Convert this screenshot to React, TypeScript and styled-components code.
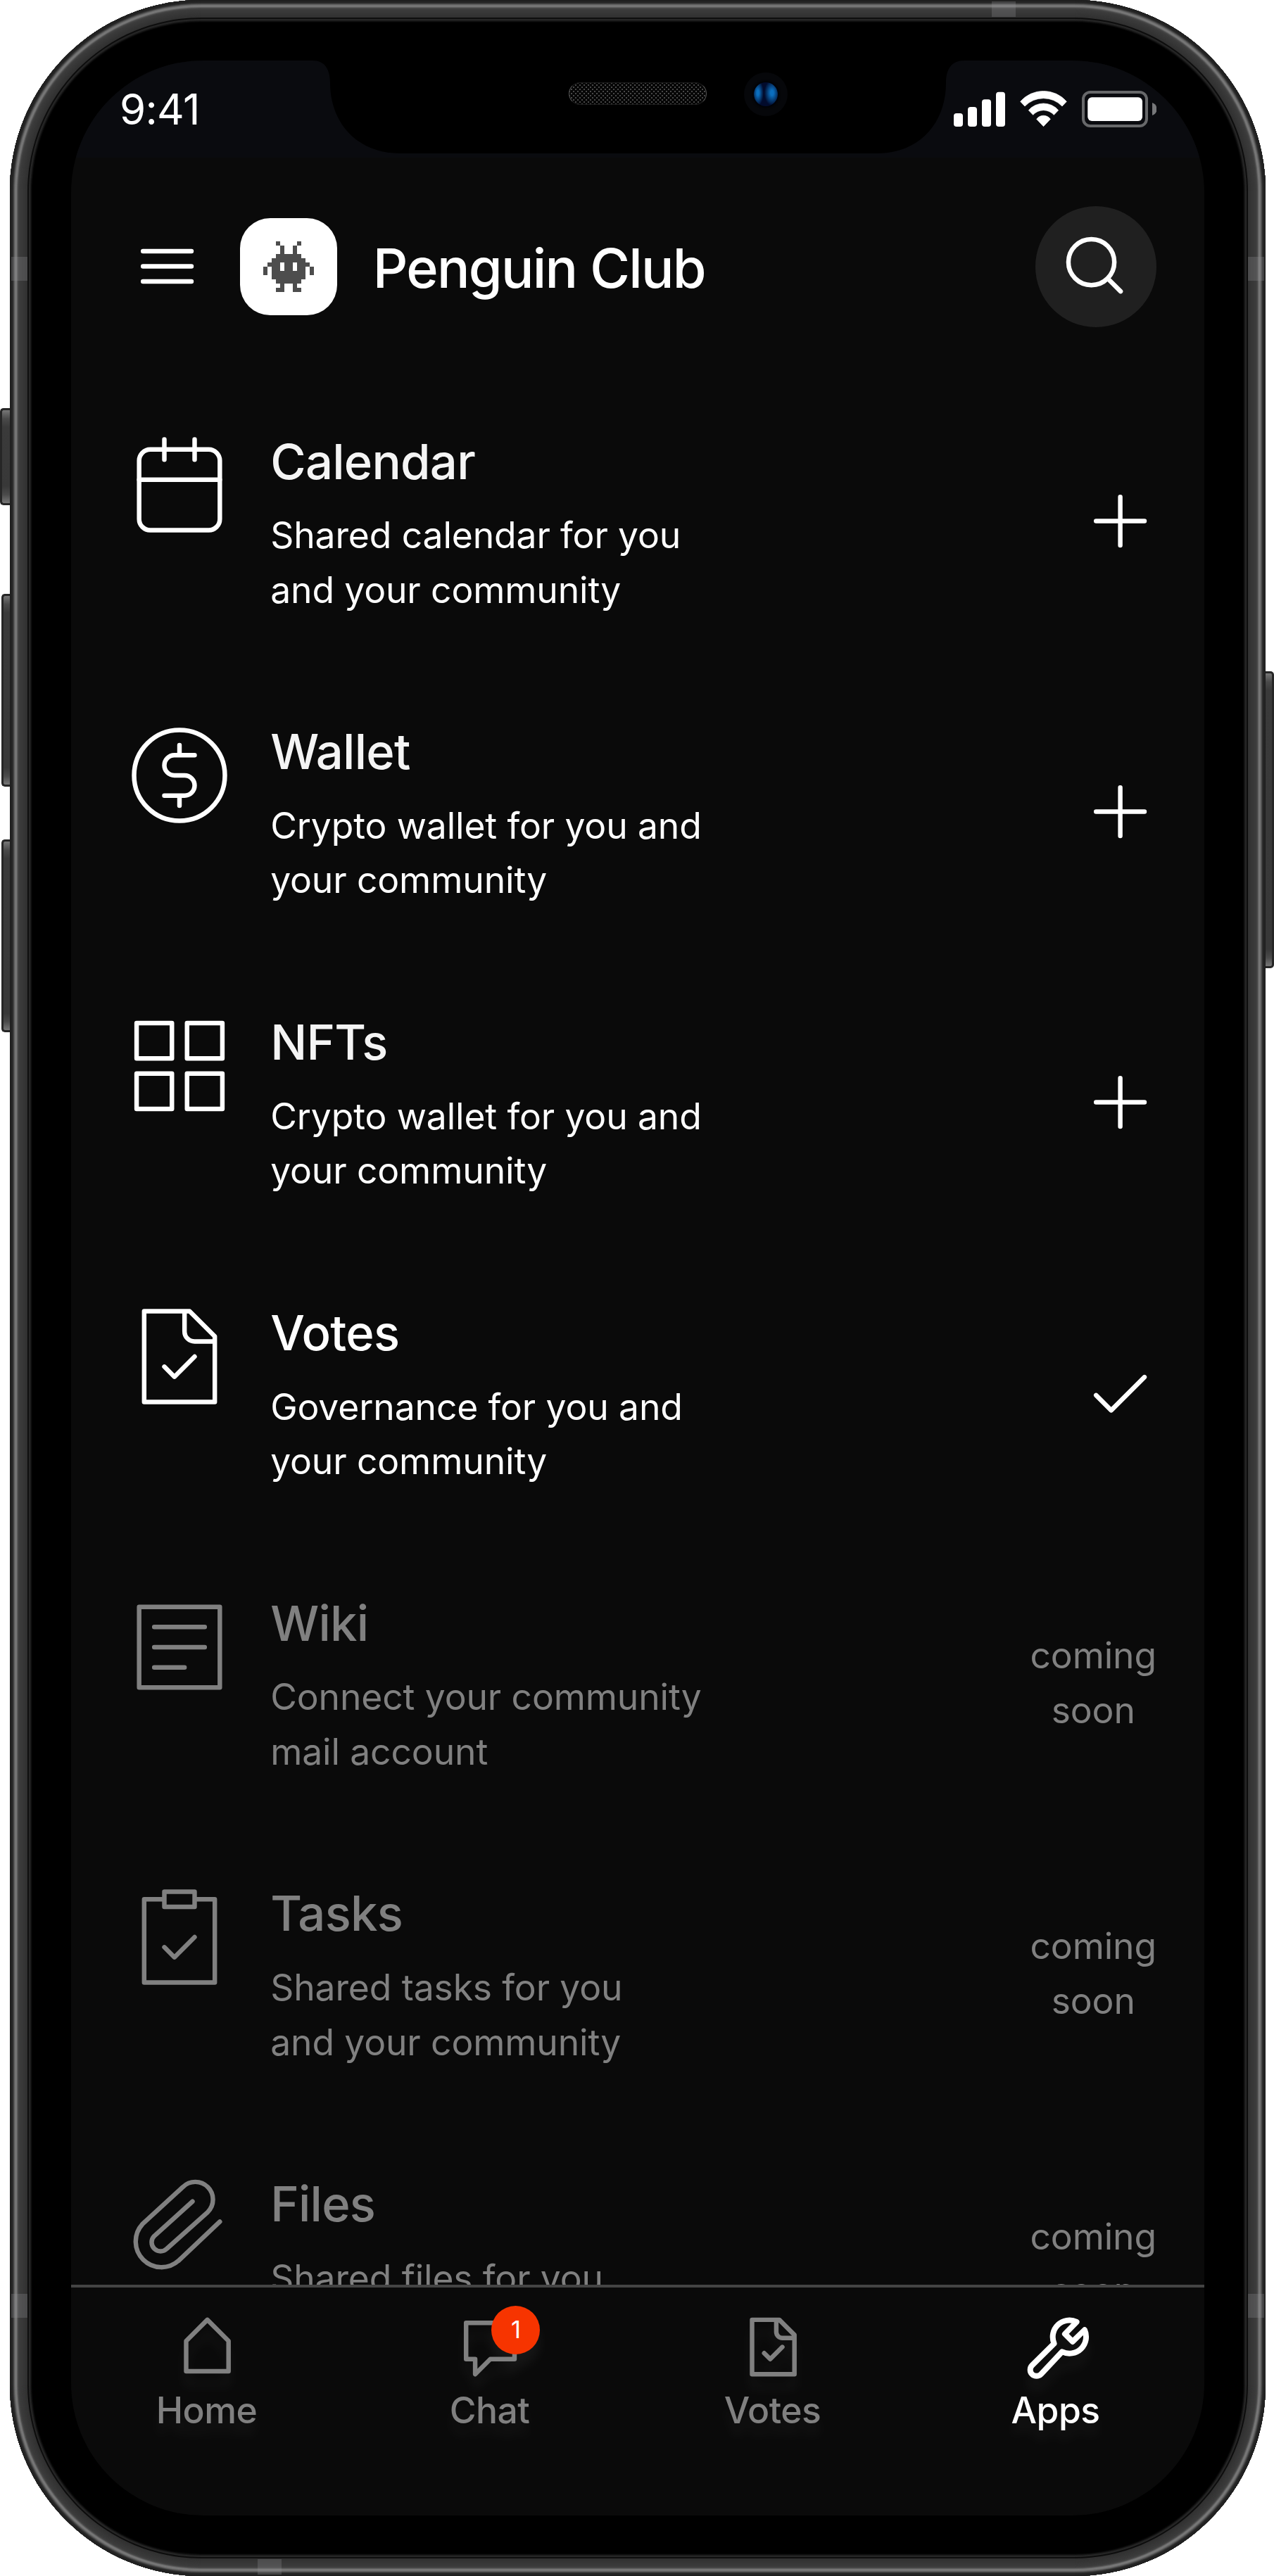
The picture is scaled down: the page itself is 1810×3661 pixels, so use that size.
import React from "react";
import styled, { createGlobalStyle, css } from "styled-components";

const GlobalStyle = createGlobalStyle`
  body {
    margin: 0;
    background: #fff;
    font-family: Inter, "Liberation Sans", sans-serif;
    font-optical-sizing: none;
    font-variation-settings: "opsz" 14;
    -webkit-font-smoothing: antialiased;
  }
`;

/* Metal rim shades, one entry per pixel from the outer edge inwards. */
const rim = [
  "#1d1d1d", "#242424", "#222222", "#272727", "#333333", "#484848", "#606060",
  "#707070", "#797979", "#747474", "#606060", "#4a4a4a", "#414141", "#3d3d3d",
  "#3b3b3b", "#3a3a3a", "#393939", "#383838", "#373737", "#363636", "#353535",
  "#343434", "#333333", "#323232", "#303030", "#0c0c0c", "#0f0f0f", "#282828",
  "#242424", "#1a1a1a", "#0e0e0e", "#050505",
];
const rimShadow = rim.map((c, i) => `inset 0 0 0 ${i + 1}px ${c}`).join(", ");

const Page = styled.div`
  position: relative;
  box-sizing: border-box;
  width: 1810px;
  height: 3661px;
  padding-left: 14px;
  overflow: hidden;
  background: #fff;
`;

const Phone = styled.div`
  position: relative;
  box-sizing: border-box;
  width: 1784px;
  height: 3661px;
  padding: 86px 87px;
  border-radius: 272px;
  background: #000;
  box-shadow: ${rimShadow};
`;

const SideButton = styled.div<{ $side: "left" | "right"; $top: number; $height: number; $width: number }>`
  position: absolute;
  ${(p) => p.$side}: 0;
  top: ${(p) => p.$top}px;
  width: ${(p) => p.$width}px;
  height: ${(p) => p.$height}px;
  box-sizing: border-box;
  border: 3px solid #262626;
  border-${(p) => (p.$side === "left" ? "right" : "left")}: 0;
  border-radius: ${(p) => (p.$side === "left" ? "5px 0 0 5px" : "0 5px 5px 0")};
  background: linear-gradient(#777 0, #4a4a4a 12px, #3a3a3a 24px, #383838 calc(100% - 24px), #4a4a4a calc(100% - 12px), #777 100%);
`;

/* The volume keys sit 2px closer to the body than the mute switch. */
const VolumeButton = styled(SideButton)`
  left: 2px;
`;

const Antenna = styled.div<{ $x: number; $y: number; $vertical?: boolean }>`
  position: absolute;
  left: ${(p) => p.$x}px;
  top: ${(p) => p.$y}px;
  width: ${(p) => (p.$vertical ? 34 : 23)}px;
  height: ${(p) => (p.$vertical ? 22 : 34)}px;
  background: rgba(150, 152, 156, 0.26);
`;

const Screen = styled.div`
  position: relative;
  display: flex;
  flex-direction: column;
  width: 1610px;
  height: 3489px;
  overflow: hidden;
  border-radius: 188px;
  background: #0a0a0a;
  color: #fff;
`;

const StatusBar = styled.div`
  position: relative;
  display: flex;
  flex: none;
  align-items: center;
  justify-content: space-between;
  box-sizing: border-box;
  height: 138px;
  padding: 0 68px 0 69px;
  background: #0a0b0f;
`;

const Clock = styled.div`
  font-size: 60px;
  font-weight: 400;
  line-height: 72px;
  letter-spacing: -0.7px;
`;

const StatusIcons = styled.svg`
  display: block;
  width: 288px;
  height: 52px;
`;

const NotchShape = styled.svg`
  position: absolute;
  left: 343px;
  top: -1px;
  width: 927px;
  height: 133px;
`;

const Speaker = styled.div`
  position: absolute;
  left: 707px;
  top: 31px;
  box-sizing: border-box;
  width: 196px;
  height: 32px;
  border: 1px solid #1c1c1c;
  border-left-color: #555;
  border-right-color: #555;
  border-radius: 16px;
  background-color: #060606;
  background-image: radial-gradient(circle, #484848 0.9px, transparent 1.5px),
    radial-gradient(circle, #484848 0.9px, transparent 1.5px);
  background-size: 6px 6px;
  background-position: 0 0, 3px 3px;
`;

const Camera = styled.div`
  position: absolute;
  left: 956px;
  top: 17px;
  display: flex;
  align-items: center;
  justify-content: center;
  width: 62px;
  height: 62px;
  border-radius: 50%;
  background: #06070a;
`;

const Lens = styled.div`
  width: 34px;
  height: 34px;
  border-radius: 50%;
  background: radial-gradient(ellipse 11px 18px at 76% 44%, #0b6fbf 20%, transparent),
    radial-gradient(ellipse 8px 18px at 17% 44%, #0b6fbf 20%, transparent), #020b2c;
  box-shadow: 0 0 3px 2px #010206;
`;

const Header = styled.header`
  display: flex;
  flex: none;
  align-items: center;
  box-sizing: border-box;
  height: 310px;
  padding: 0 68px 0 85px;
`;

const Avatar = styled.div`
  display: flex;
  flex: none;
  align-items: center;
  justify-content: center;
  width: 138px;
  height: 138px;
  margin-left: 51.6px;
  border-radius: 43px;
  background: #fff;
`;

const Robot = styled.svg`
  display: block;
  width: 72px;
  height: 72px;
`;

const Title = styled.h1`
  flex: 1;
  margin: 0 0 0 51px;
  font-size: 77.4px;
  font-weight: 500;
  line-height: 96px;
  letter-spacing: -1.75px;
  padding-top: 4px;
`;

const SearchButton = styled.button`
  display: flex;
  flex: none;
  align-items: center;
  justify-content: center;
  width: 172px;
  height: 172px;
  padding: 0;
  border: 0;
  border-radius: 50%;
  background: #202020;
  color: #fff;
`;

const AppList = styled.main`
  display: flex;
  flex: 1;
  flex-direction: column;
  gap: 139.1px;
  min-height: 0;
  box-sizing: border-box;
  padding: 69.4px 68px 0 68.2px;
  overflow: hidden;
`;

const Row = styled.section<{ $muted: boolean }>`
  display: flex;
  flex: none;
  height: 273.7px;
  color: ${(p) => (p.$muted ? "#808080" : "#fff")};
`;

const RowText = styled.div`
  flex: 1;
  padding: 1.2px 0 0 43px;
`;

const RowTitle = styled.h2<{ $soft: boolean }>`
  margin: 0 0 14.5px;
  font-size: 68.8px;
  font-weight: 500;
  line-height: 103.2px;
  letter-spacing: -0.75px;
  ${(p) => p.$soft && css`color: #f4f4f4;`}
`;

const RowDescription = styled.p`
  margin: 0;
  font-size: 51.6px;
  font-weight: 400;
  line-height: 77.4px;
  letter-spacing: -0.12px;
  white-space: pre-line;
`;

const RowAction = styled.div`
  display: flex;
  flex: none;
  align-items: center;
  padding-top: 1px;
`;

const ComingSoon = styled.div`
  font-size: 51.6px;
  line-height: 77.4px;
  letter-spacing: -0.12px;
  text-align: center;
  white-space: pre-line;
`;

const NavBar = styled.nav`
  display: flex;
  flex: none;
  gap: 142px;
  box-sizing: border-box;
  height: 328px;
  padding: 33.3px 0 0 64px;
  border-top: 4.3px solid #444;
`;

const NavItem = styled.a<{ $active: boolean }>`
  display: flex;
  flex-direction: column;
  align-items: center;
  width: 260px;
  color: ${(p) => (p.$active ? "#fff" : "#808080")};
  filter: drop-shadow(0 18px 8px rgba(255, 255, 255, 0.05));
`;

const NavIcon = styled.div`
  position: relative;
  flex: none;
  width: 103.2px;
  height: 103.2px;
`;

const NavLabel = styled.span`
  font-size: 51.6px;
  font-weight: 500;
  line-height: 77.4px;
  letter-spacing: -0.5px;
  margin-right: 3px;
`;

const Badge = styled.span`
  position: absolute;
  left: 53px;
  top: -7.5px;
  display: flex;
  align-items: center;
  justify-content: center;
  width: 69px;
  height: 69px;
  border-radius: 50%;
  background: #f73400;
  color: #fff;
  font-size: 34.4px;
  line-height: 34px;
`;

const IconSvg = styled.svg<{ $size: number }>`
  display: block;
  flex: none;
  width: ${(p) => p.$size}px;
  height: ${(p) => p.$size}px;
  fill: none;
  stroke: currentColor;
  stroke-linecap: round;
  stroke-linejoin: round;
`;

const shapes: Record<string, React.ReactNode> = {
  calendar: (
    <>
      <rect x="-8" y="-7" width="16" height="16" rx="2.2" />
      <path d="M-8 -1H8M-3 -9V-5M3 -9V-5" />
    </>
  ),
  wallet: (
    <>
      <circle r="9" />
      <path d="M3 -4H-1A2 2 0 0 0 -1 0H1A2 2 0 0 1 1 4H-3M0 -6V-4M0 4V6" />
    </>
  ),
  grid: <path d="M-8.5 -8.5H-1.5V-1.5H-8.5ZM1.5 -8.5H8.5V-1.5H1.5ZM-8.5 1.5H-1.5V8.5H-8.5ZM1.5 1.5H8.5V8.5H1.5Z" />,
  votes: <path d="M-7 -9H2L7 -4V9H-7ZM1 -9V-5A2 2 0 0 0 3 -3H7M-3 2L-1 4L3 0" />,
  wiki: <path d="M-8 -8H8V8H-8ZM-5 -4H5M-5 0H5M-5 4H1" />,
  tasks: <path d="M-3 -7.5H-7V9H7V-7.5H3M-3 -9H3V-6H-3ZM-3 2L-1 4L3 0" />,
  files: (
    <path d="M8 -1.2L-0.14 6.5A5.1 5.1 0 0 1 -7.35 -0.7L0.67 -8.07A3.5 3.5 0 0 1 5.6 -3.1L-2.5 4.15A1.75 1.75 0 0 1 -5 1.65L2.58 -5.2" />
  ),
  plus: <path d="M-8 0H8M0 -8V8" />,
  check: <path d="M-8 1L-3 6L8 -5" />,
  menu: <path d="M-8 -5H8M-8 0H8M-8 5H8" />,
  search: (
    <>
      <circle cx="-0.9" cy="-0.9" r="4.55" />
      <path d="M2.4 2.4L4.9 4.9" />
    </>
  ),
  home: <path d="M0 -9L7 -2V8H-7V-2Z" />,
  chat: <path d="M-8 -8H8V4H0L-5 9V4H-8Z" />,
  wrench: (
    <path
      transform="scale(0.0775) translate(-213 -199)"
      d="M300 92L250 143L283 176L334 126A71 71 0 0 1 238 219L148 315A26.5 26.5 0 0 1 110 277L204 184A71 71 0 0 1 300 92Z"
    />
  ),
};

function Icon({ name, size, stroke }: { name: string; size: number; stroke: number }) {
  return (
    <IconSvg $size={size} viewBox="-12 -12 24 24" strokeWidth={name === "wrench" ? 24 : stroke}>
      {shapes[name]}
    </IconSvg>
  );
}

const robotRows = [
  "...#....#...",
  "....#..#....",
  "....#..#....",
  "...######...",
  "..########..",
  ".###.##.###.",
  "#.##.##.##.#",
  "#.########.#",
  "..########..",
  "...######...",
  "....#..#....",
  "...##..##...",
];
const robotPath = robotRows
  .flatMap((row, y) => [...row].map((c, x) => (c === "#" ? `M${x} ${y}h1v1h-1z` : "")))
  .join("");

type AppEntry = {
  icon: string;
  title: string;
  description: string;
  action: "plus" | "check" | "soon";
};

const apps: AppEntry[] = [
  { icon: "calendar", title: "Calendar", description: "Shared calendar for you\nand your community", action: "plus" },
  { icon: "wallet", title: "Wallet", description: "Crypto wallet for you and\nyour community", action: "plus" },
  { icon: "grid", title: "NFTs", description: "Crypto wallet for you and\nyour community", action: "plus" },
  { icon: "votes", title: "Votes", description: "Governance for you and\nyour community", action: "check" },
  { icon: "wiki", title: "Wiki", description: "Connect your community\nmail account", action: "soon" },
  { icon: "tasks", title: "Tasks", description: "Shared tasks for you\nand your community", action: "soon" },
  { icon: "files", title: "Files", description: "Shared files for you\nand your community", action: "soon" },
];

const tabs = [
  { icon: "home", label: "Home" },
  { icon: "chat", label: "Chat", badge: 1 },
  { icon: "votes", label: "Votes" },
  { icon: "wrench", label: "Apps", active: true },
];

function AppRow({ app }: { app: AppEntry }) {
  return (
    <Row $muted={app.action === "soon"}>
      <Icon name={app.icon} size={172} stroke={0.9} />
      <RowText>
        <RowTitle $soft={app.action === "plus"}>{app.title}</RowTitle>
        <RowDescription>{app.description}</RowDescription>
      </RowText>
      <RowAction>
        {app.action === "soon" ? (
          <ComingSoon>{"coming\nsoon"}</ComingSoon>
        ) : (
          <Icon name={app.action} size={103.2} stroke={1.5} />
        )}
      </RowAction>
    </Row>
  );
}

export default function App() {
  return (
    <Page>
      <GlobalStyle />
      <SideButton $side="left" $top={580} $height={138} $width={16} />
      <VolumeButton $side="left" $top={844} $height={274} $width={14} />
      <VolumeButton $side="left" $top={1193} $height={274} $width={14} />
      <SideButton $side="right" $top={954} $height={422} $width={14} />
      <Phone>
        <Antenna $x={2} $y={365} />
        <Antenna $x={1759} $y={365} />
        <Antenna $x={2} $y={3260} />
        <Antenna $x={1759} $y={3260} />
        <Antenna $x={1395} $y={2} $vertical />
        <Antenna $x={352} $y={3637} $vertical />
        <Screen>
          <StatusBar>
            <Clock>9:41</Clock>
            <StatusIcons viewBox="1355 129 288 52">
              <g fill="#fff">
                <rect x="1355" y="161" width="13" height="19" rx="4" />
                <rect x="1375" y="152" width="13" height="28" rx="4" />
                <rect x="1395" y="141.3" width="13" height="38.7" rx="4" />
                <rect x="1415" y="130.7" width="13" height="49.3" rx="4" />
                <g transform="translate(1340 100) scale(0.33333)" stroke="#fff" strokeWidth="2" strokeLinejoin="round">
                  <path d="M329 133A130.6 130.6 0 0 1 526 133L507 153A110 110 0 0 0 348 153Z" />
                  <path d="M364 170A84 84 0 0 1 491 170L472 190A59.5 59.5 0 0 0 383 190Z" />
                  <path d="M398 208A36 36 0 0 1 457 208L427.5 239Z" />
                </g>
                <rect x="1545.3" y="138.3" width="77.7" height="33.7" rx="6" />
              </g>
              <rect x="1539" y="131" width="90" height="48" rx="10" fill="none" stroke="#67686a" strokeWidth="4" />
              <path d="M1637 146A9.5 9.5 0 0 1 1637 164Z" fill="#77787a" />
            </StatusIcons>
            <NotchShape viewBox="0 0 927 133">
              <path d="M0 0V1C17 1 25 13 25 33C25 88 62 133 124 133H802C864 133 900 88 900 33C900 13 908 1 926 1V0Z" fill="#000" />
            </NotchShape>
            <Speaker />
            <Camera>
              <Lens />
            </Camera>
          </StatusBar>
          <Header>
            <Icon name="menu" size={103.2} stroke={1.5} />
            <Avatar>
              <Robot viewBox="0 0 12 12" shapeRendering="crispEdges">
                <path d={robotPath} fill="#4d4d4d" />
              </Robot>
            </Avatar>
            <Title>Penguin Club</Title>
            <SearchButton aria-label="Search">
              <Icon name="search" size={172} stroke={0.9} />
            </SearchButton>
          </Header>
          <AppList>
            {apps.map((app) => (
              <AppRow key={app.title} app={app} />
            ))}
          </AppList>
          <NavBar>
            {tabs.map((tab) => (
              <NavItem key={tab.label} $active={!!tab.active}>
                <NavIcon>
                  <Icon name={tab.icon} size={103.2} stroke={1.5} />
                  {tab.badge && <Badge>{tab.badge}</Badge>}
                </NavIcon>
                <NavLabel>{tab.label}</NavLabel>
              </NavItem>
            ))}
          </NavBar>
        </Screen>
      </Phone>
    </Page>
  );
}
